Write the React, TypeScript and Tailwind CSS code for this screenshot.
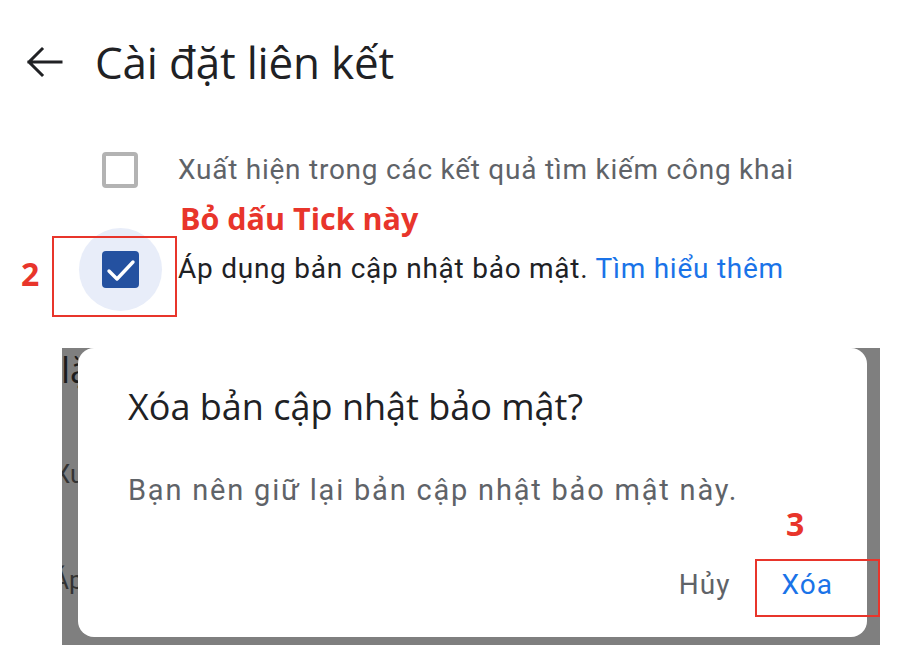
import React from 'react'

function BackArrow() {
  return (
    <svg width="40" height="34" viewBox="0 0 40 34" fill="none" className="shrink-0">
      <path d="M37 17H5M18 4L5 17l13 13" stroke="#202124" strokeWidth="3" strokeLinecap="square" strokeLinejoin="miter" />
    </svg>
  )
}

function CheckedBox() {
  return (
    <div className="relative w-[37px] h-[37px] shrink-0">
      <div className="absolute left-[-23px] top-[-23px] w-[83px] h-[83px] rounded-full bg-[#e8edf9]" />
      <div className="absolute inset-0 rounded-[4px] bg-[#2451a0]">
        <svg width="37" height="37" viewBox="0 0 37 37" fill="none">
          <path d="M7 20l8 8L31 11" stroke="white" strokeWidth="3.4" strokeLinecap="round" strokeLinejoin="round" />
        </svg>
      </div>
    </div>
  )
}

export default function App() {
  return (
    <div className="relative w-[922px] h-[672px] bg-white overflow-hidden font-['Roboto',sans-serif]">
      {/* header */}
      <div className="flex items-center pt-[40px] pl-[24px] h-[84px]">
        <BackArrow />
        <h1 className="ml-[31px] text-[44px] leading-[44px] text-[#202124] font-['Open_Sans',sans-serif] tracking-[-0.2px]">
          Cài đặt liên kết
        </h1>
      </div>

      {/* options */}
      <div className="flex items-center mt-[68px] h-[36px]">
        <div className="ml-[102px] w-[36px] h-[36px] shrink-0 rounded-[4px] border-[4px] border-[#b3b3b3]" />
        <span className="ml-[40px] text-[28px] leading-[36px] tracking-[0.75px] text-[#5f6368] whitespace-nowrap">
          Xuất hiện trong các kết quả tìm kiếm công khai
        </span>
      </div>

      <div className="mt-[12px] ml-[180px] h-[36px] text-[30.5px] leading-[36px] font-bold text-[#e8352b] font-['Open_Sans',sans-serif]">
        Bỏ dấu Tick này
      </div>

      <div className="flex items-center mt-[15px] h-[36px]">
        <div className="ml-[102px]">
          <CheckedBox />
        </div>
        <span className="ml-[39px] text-[28px] leading-[36px] tracking-[0.75px] text-[#202124] relative whitespace-nowrap">
          Áp dụng bản cập nhật bảo mật. <span className="text-[#1a73e8]">Tìm hiểu thêm</span>
        </span>
      </div>

      {/* annotation 2 */}
      <div className="absolute left-[52px] top-[236px] w-[125px] h-[81px] border-2 border-[#e8352b]" />
      <div className="absolute left-[21px] top-[254px] text-[32px] leading-[40px] font-bold text-[#e8352b] font-['Open_Sans',sans-serif]">
        2
      </div>

      {/* dimmed area with dialog */}
      <div className="flex mt-[61px] ml-[62px] w-[818px] h-[297px] bg-[#7f7f7f]">
        <div className="w-[16px] shrink-0 overflow-hidden flex flex-col">
          <span className="ml-[-1px] mt-[2px] text-[36px] leading-[40px] text-[#1c1c1c] whitespace-nowrap font-['Open_Sans',sans-serif]">
            lặp
          </span>
          <span className="ml-[-8px] mt-[66px] text-[26px] leading-[36px] text-[#333333] whitespace-nowrap">
            Xuất
          </span>
          <span className="ml-[-10px] mt-[70px] text-[26px] leading-[36px] text-[#333333] whitespace-nowrap">
            Áp
          </span>
        </div>
        <div className="w-[789px] h-[289px] bg-white rounded-[16px] pl-[50px] pr-[34px] flex flex-col">
          <div className="mt-[39px] text-[36px] leading-[40px] text-[#202124] font-['Open_Sans',sans-serif] whitespace-nowrap">
            Xóa bản cập nhật bảo mật?
          </div>
          <div className="mt-[45px] text-[29px] leading-[36px] tracking-[1.8px] text-[#5f6368] whitespace-nowrap">
            Bạn nên giữ lại bản cập nhật bảo mật này.
          </div>
          <div className="mt-[59px] flex justify-end items-center gap-[51px] text-[28px] leading-[36px] tracking-[1px]">
            <span className="text-[#5f6368]">Hủy</span>
            <span className="text-[#1a73e8]">Xóa</span>
          </div>
        </div>
      </div>

      {/* annotation 3 */}
      <div className="absolute left-[786px] top-[504px] text-[32px] leading-[40px] font-bold text-[#e8352b] font-['Open_Sans',sans-serif]">
        3
      </div>
      <div className="absolute left-[755px] top-[559px] w-[125px] h-[58px] border-2 border-[#e8352b]" />
    </div>
  )
}
